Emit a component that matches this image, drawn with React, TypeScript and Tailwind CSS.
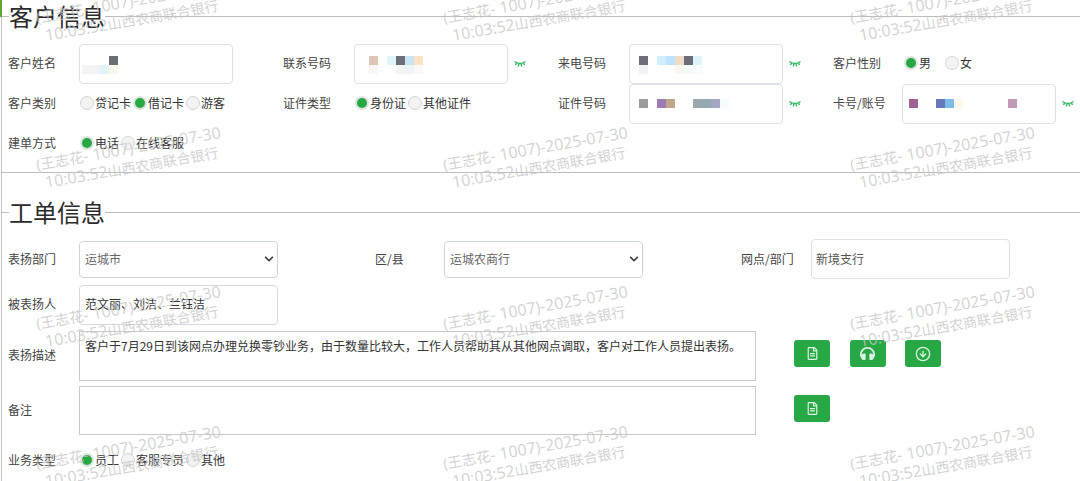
import React from "react";
import { FaRegFileAlt, FaHeadphones, FaChevronDown } from "react-icons/fa";
import { FiArrowDownCircle } from "react-icons/fi";

const FONT = "font-['Noto_Sans_CJK_SC','Liberation_Sans',sans-serif]";

type Cell = string | null;

function Mosaic({ rows, className }: { rows: Cell[][]; className: string }) {
  return (
    <div className={className}>
      {rows.map((r, i) => (
        <div key={i} className="flex h-[9px]">
          {r.map((c, j) => (
            <span key={j} className="w-[9px] h-[9px]" style={{ background: c ?? "transparent" }} />
          ))}
        </div>
      ))}
    </div>
  );
}

function Eye() {
  return (
    <svg width="12" height="8" viewBox="0 0 12 8" className="ml-[6px] shrink-0" fill="none" stroke="#2fb866" strokeWidth="1.4">
      <path d="M0.5 1.5 Q6 5.5 11.5 1.5" />
      <path d="M2.5 3 L1.5 5 M4.8 4 L4.4 6.5 M7.2 4 L7.6 6.5 M9.5 3 L10.5 5" />
    </svg>
  );
}

function Radio({ label, checked, gap = "mr-[2px]" }: { label: string; checked?: boolean; gap?: string }) {
  return (
    <span className={`inline-flex items-center ${gap}`}>
      {checked ? (
        <span className="w-[14px] h-[14px] rounded-full bg-[#28a745] border-2 border-[#dfe3e0] mr-[1px]" />
      ) : (
        <span className="w-[14px] h-[14px] rounded-full bg-[#f3f3f3] border border-[#d6d6d6] mr-[1px]" />
      )}
      <span>{label}</span>
    </span>
  );
}

function Label({ w, children, className = "" }: { w: string; children: React.ReactNode; className?: string }) {
  return <span className={`${w} shrink-0 text-[#444] ${className}`}>{children}</span>;
}

function MaskField({ w = "w-[154px]", rows, pad }: { w?: string; rows: Cell[][]; pad: string }) {
  return (
    <div className={`${w} h-[40px] shrink-0 bg-white rounded-[4px] border-[1.5px] border-[#dde1e8]`}>
      <Mosaic rows={rows} className={pad} />
    </div>
  );
}

function Section({ title, children, bottom }: { title: string; children: React.ReactNode; bottom?: boolean }) {
  return (
    <fieldset className={`border-t border-[#bdbdbd] ${bottom ? "border-b" : ""}`}>
      <legend className="ml-[7px] text-2xl leading-8 text-[#2b2b2b]">{title}</legend>
      {children}
    </fieldset>
  );
}

function ActionButton({ children }: { children: React.ReactNode }) {
  return (
    <button className="w-[36px] h-[27px] rounded-[3px] bg-[#28a745] flex items-center justify-center text-[#d8f3df] text-[13px]">
      {children}
    </button>
  );
}

function Dropdown({ text }: { text: string }) {
  return (
    <div className="w-[199px] h-[37px] rounded-[4px] border border-[#cfd5dd] bg-white flex items-center justify-between pl-[5px] pr-[3px]">
      <span className="text-[#666]">{text}</span>
      <FaChevronDown className="text-[#3a3f44] text-[10px]" />
    </div>
  );
}

const columns = [130, 537, 944];
const rowsY = [11, 158, 317, 457];

function Watermarks() {
  return (
    <div className="absolute inset-0 pointer-events-none overflow-hidden font-['Open_Sans','Noto_Sans_CJK_SC',sans-serif] text-[#c6c6c6]/80 text-[16px] leading-[19px]">
      {rowsY.flatMap((y) =>
        columns.map((x) => (
          <div
            key={`${x}-${y}`}
            className="absolute w-[240px] text-center -rotate-[10deg] whitespace-nowrap -translate-x-1/2 -translate-y-1/2"
            style={{ left: x, top: y }}
          >
            <div><span className="text-[14.5px]">(王志花</span>- 1007)-2025-07-30</div>
            <div>10:03:52<span className="text-[14px]">山西农商联合银行</span></div>
          </div>
        ))
      )}
    </div>
  );
}

export default function App() {
  return (
    <div className={`relative w-[1080px] h-[481px] overflow-hidden bg-white text-[12px] text-[#333] ${FONT}`}>
      <div className="absolute left-0 top-0 w-[2px] h-[17px] bg-[#5aa832]" />
      <div className="ml-px border-l border-[#c4c4c4] h-full">
        <Section title="客户信息" bottom>
          <div className="mt-3 pb-2 pl-[6px]">
            <div className="grid grid-cols-[275px_275px_275px_275px] h-[40px] items-center">
              <div className="flex items-center">
                <Label w="w-[71px]" className="pb-[2px]">客户姓名</Label>
                <MaskField
                  pad="pt-[11px] pl-[2px]"
                  rows={[
                    [null, null, null, "#6b6e76"],
                    ["#f2f3f5", "#f2f3f5", "#e4f3fb", "#f7f9ec"],
                  ]}
                />
              </div>
              <div className="flex items-center">
                <Label w="w-[71px]" className="pb-[2px]">联系号码</Label>
                <MaskField
                  pad="pt-[11px] pl-[14px]"
                  rows={[
                    ["#dcc6b4", "#ffffff", "#e0f4fb", "#6c6f78", "#c9e4f3", "#fde3c4"],
                    ["#f8f7f5", null, "#ffffff", "#f3f4f5", "#f0f4f6", "#fbf8f5"],
                  ]}
                />
                <Eye />
              </div>
              <div className="flex items-center">
                <Label w="w-[71px]" className="pb-[2px]">来电号码</Label>
                <MaskField
                  pad="pt-[11px] pl-[9px]"
                  rows={[
                    ["#6b6e79", null, "#d0eefc", "#bfe3fb", "#f0dcc8", "#6b6e78", "#def3fc"],
                    ["#f2f4f4", null, null, null, "#faf6f0", "#f5fafd", "#f8fbfd"],
                  ]}
                />
                <Eye />
              </div>
              <div className="flex items-center pb-[2px]">
                <Label w="w-[71px]">客户性别</Label>
                <Radio label="男" checked gap="mr-[14px]" />
                <Radio label="女" />
              </div>
            </div>
            <div className="grid grid-cols-[275px_275px_275px_275px] h-[40px] items-center">
              <div className="flex items-center pb-[3px]">
                <Label w="w-[72px]">客户类别</Label>
                <Radio label="贷记卡" />
                <Radio label="借记卡" checked />
                <Radio label="游客" />
              </div>
              <div className="flex items-center pb-[3px]">
                <Label w="w-[72px]">证件类型</Label>
                <Radio label="身份证" checked />
                <Radio label="其他证件" />
              </div>
              <div className="flex items-center">
                <Label w="w-[71px]" className="pb-[3px]">证件号码</Label>
                <MaskField
                  pad="pt-[14px] pl-[9px]"
                  rows={[["#9c9c9c", null, "#a07cb4", "#bda88a", null, null, "#9aa9b0", "#94aab0", "#a5a5c4", "#f5fcfd"]]}
                />
                <Eye />
              </div>
              <div className="flex items-center">
                <Label w="w-[69px]" className="pb-[3px]">卡号/账号</Label>
                <MaskField
                  pad="pt-[14px] pl-[6px]"
                  rows={[["#a06292", null, null, "#6579b8", "#7ebcea", "#fff7ec", null, null, null, null, null, "#c29ab8"]]}
                />
                <Eye />
              </div>
            </div>
            <div className="flex items-center h-[40px] pb-[3px]">
              <Label w="w-[72px]">建单方式</Label>
              <Radio label="电话" checked />
              <Radio label="在线客服" />
            </div>
          </div>
        </Section>

        <div className="mt-[23px]">
          <Section title="工单信息">
            <div className="pl-[6px]">
              <div className="mt-[11px] h-[40px] flex items-center">
                <Label w="w-[71px]">表扬部门</Label>
                <Dropdown text="运城市" />
                <span className="ml-[97px] w-[69px] text-[#444]">区/县</span>
                <Dropdown text="运城农商行" />
                <span className="ml-[98px] w-[70px] text-[#444]">网点/部门</span>
                <div className="w-[199px] h-[40px] rounded-[4px] border-[1.5px] border-[#dde1e8] flex items-center pl-[4px] text-[#555]">
                  新境支行
                </div>
              </div>
              <div className="mt-[6px] h-[40px] flex items-center">
                <Label w="w-[71px]" className="pb-[2px]">被表扬人</Label>
                <div className="w-[199px] h-[40px] rounded-[4px] border border-[#d5dae1] flex items-center pl-[5px] pb-[2px] text-[#333]">
                  范文丽、刘洁、兰钰洁
                </div>
              </div>
              <div className="mt-[6px] flex items-center h-[50px]">
                <Label w="w-[71px]" className="pb-[2px]">表扬描述</Label>
                <div className="w-[677px] h-[50px] border border-[#c9c9c9] px-[5px] pt-[4px] leading-[20px] text-[#333]">
                  客户于7月29日到该网点办理兑换零钞业务，由于数量比较大，工作人员帮助其从其他网点调取，客户对工作人员提出表扬。
                </div>
                <div className="ml-[38px] flex self-start pt-[9px] gap-[19.5px]">
                  <ActionButton><FaRegFileAlt /></ActionButton>
                  <ActionButton><FaHeadphones className="text-[15px]" /></ActionButton>
                  <ActionButton><FiArrowDownCircle className="text-[16px]" /></ActionButton>
                </div>
              </div>
              <div className="mt-[5px] flex items-center h-[49px]">
                <Label w="w-[71px]" className="pb-[2px]">备注</Label>
                <div className="w-[677px] h-[49px] border border-[#c9c9c9]" />
                <div className="ml-[38px] flex self-start pt-[9px]">
                  <ActionButton><FaRegFileAlt /></ActionButton>
                </div>
              </div>
              <div className="mt-[6px] flex items-center h-[40px] pb-[2px]">
                <Label w="w-[72px]">业务类型</Label>
                <Radio label="员工" checked />
                <Radio label="客服专员" />
                <Radio label="其他" />
              </div>
            </div>
          </Section>
        </div>
      </div>
      <Watermarks />
    </div>
  );
}
